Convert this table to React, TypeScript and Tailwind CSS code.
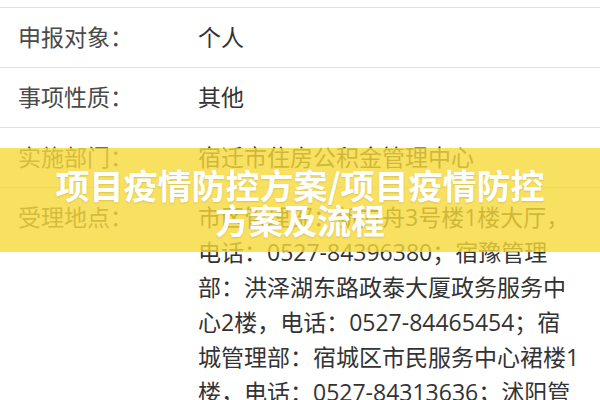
const rows = [
  { label: '申报对象：', value: '个人' },
  { label: '事项性质：', value: '其他' },
  { label: '实施部门：', value: '宿迁市住房公积金管理中心' },
  {
    label: '受理地点：',
    value:
      '市区管理部：新方舟3号楼1楼大厅，电话：0527-84396380；宿豫管理部：洪泽湖东路政泰大厦政务服务中心2楼，电话：0527-84465454；宿城管理部：宿城区市民服务中心裙楼1楼，电话：0527-84313636；沭阳管理部：沭阳县人民中路政务服务中心，电话：0527-83598216',
  },
];

// detail rows (labels on the left, values wrap)
function DetailList() {
  return (
    <div className="font-['Open_Sans','Noto_Sans_CJK_SC',sans-serif] text-[23px] leading-[35px]">
      <div className="h-[8px] border-b border-[#e2e2e2]" />
      {rows.map((row) => (
        <div key={row.label} className="flex border-b border-[#e2e2e2] py-3">
          <div className="w-[198px] shrink-0 pl-[18px] text-[#4a4a4a]">{row.label}</div>
          <div className="w-[383px] text-[#333333] break-all">{row.value}</div>
        </div>
      ))}
    </div>
  );
}

export default function App() {
  return (
    <div className="relative h-[400px] w-[600px] overflow-hidden bg-white">
      <DetailList />
      {/* title banner over the list */}
      <div className="absolute left-0 right-0 top-[148px] flex h-[104px] items-center justify-center bg-[#f6d83a]/80 pt-1">
        <h1 className="text-center font-['Noto_Sans_CJK_SC',sans-serif] text-[34px] font-bold leading-[35px] text-white [text-shadow:0_1px_2px_rgba(0,0,0,0.12)]">
          项目疫情防控方案/项目疫情防控
          <br />
          方案及流程
        </h1>
      </div>
    </div>
  );
}
